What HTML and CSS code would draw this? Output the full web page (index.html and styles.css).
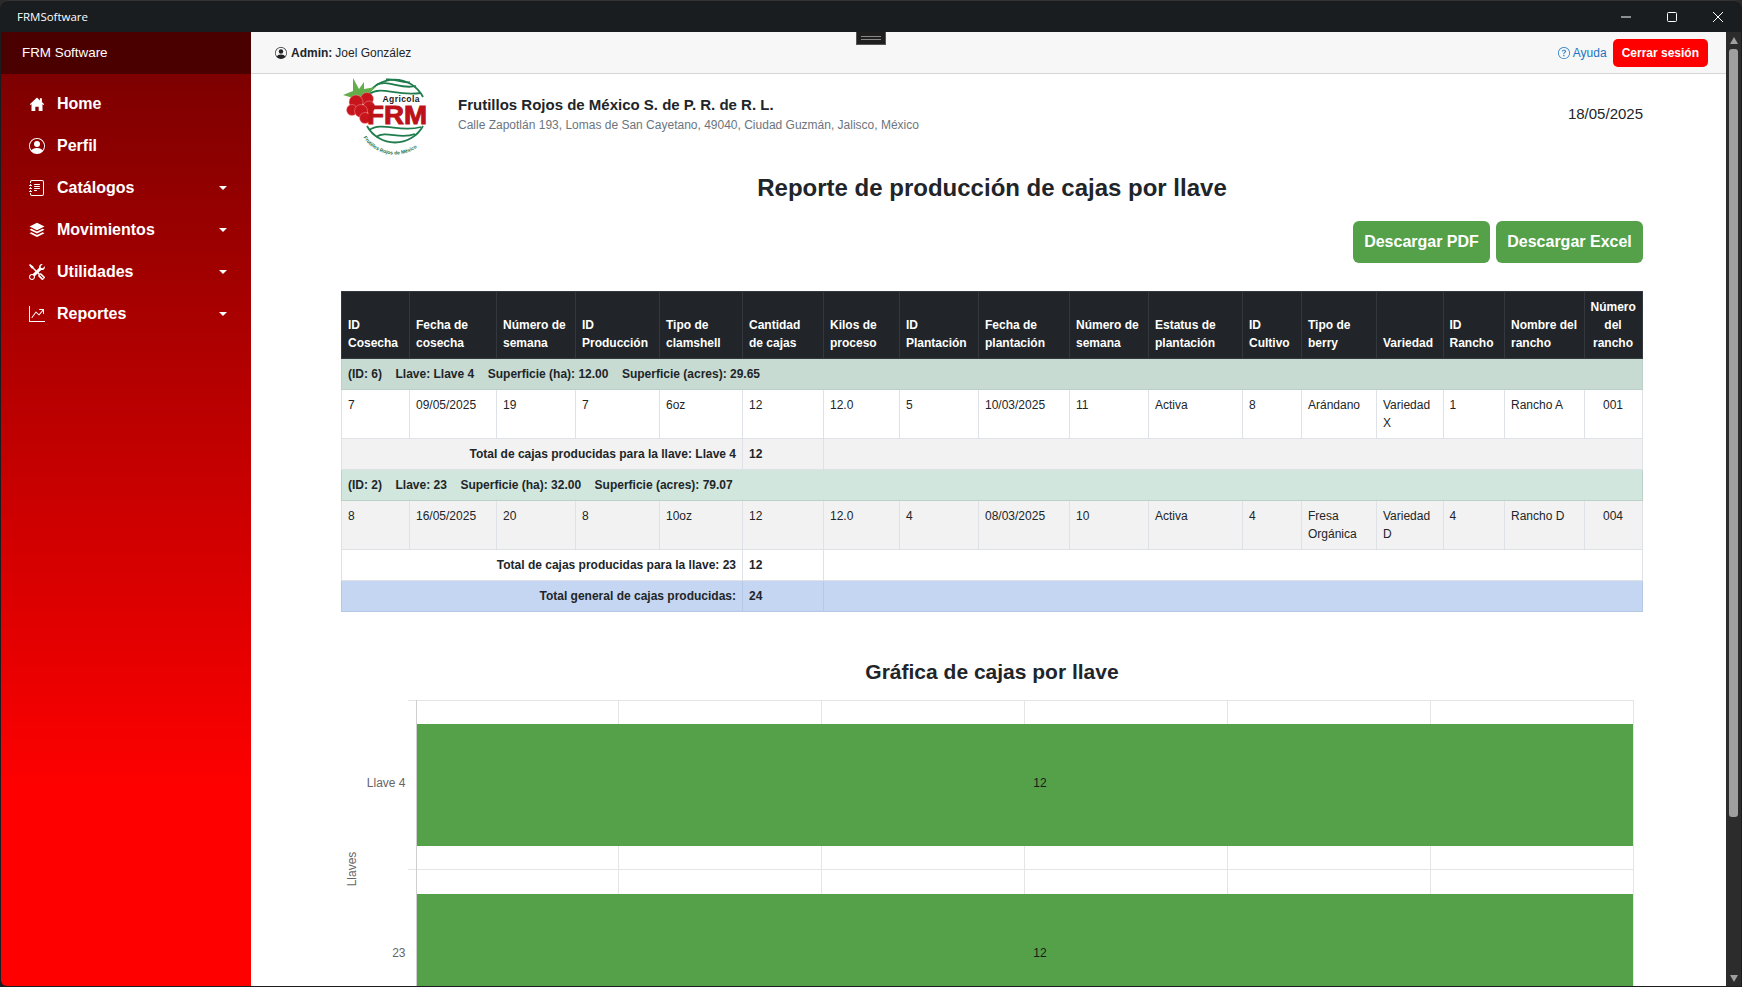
FILE: index.html
```html
<!DOCTYPE html>
<html lang="es">
<head>
    <meta charset="UTF-8">
    <title>FRMSoftware</title>
    <link rel="stylesheet" href="styles.css">
</head>
<body>
<div class="window">
    <div class="titlebar">
        <span class="titlebar-name">FRMSoftware</span>
        <div class="window-controls">
            <svg viewBox="0 0 10 10"><path d="M0 5h10" /></svg>
            <svg viewBox="0 0 10 10"><rect x=".5" y=".5" width="9" height="9" rx="1" /></svg>
            <svg viewBox="0 0 10 10"><path d="M0 0l10 10M10 0L0 10" /></svg>
        </div>
    </div>
    <div class="app">
        <aside class="sidebar">
            <div class="brand">FRM Software</div>
            <nav class="side-nav">
                <a class="side-link">
                    <svg class="side-icon" viewBox="0 0 16 16"><path d="M8 1.5.8 8.2l.8.7.9-.8V15h3.8v-4.3h3.4V15h3.8V8.1l.9.8.8-.7-2.3-2.2V2.2h-2v2.2z" /></svg>
                    <span>Home</span>
                </a>
                <a class="side-link">
                    <svg class="side-icon" viewBox="0 0 16 16"><path d="M11 6a3 3 0 1 1-6 0 3 3 0 0 1 6 0z" /><path fill-rule="evenodd" d="M0 8a8 8 0 1 1 16 0A8 8 0 0 1 0 8zm8-7a7 7 0 0 0-5.468 11.37C3.242 11.226 4.805 10 8 10s4.757 1.225 5.468 2.37A7 7 0 0 0 8 1z" /></svg>
                    <span>Perfil</span>
                </a>
                <a class="side-link">
                    <svg class="side-icon" viewBox="0 0 16 16"><path d="M5 10.5a.5.5 0 0 1 .5-.5h2a.5.5 0 0 1 0 1h-2a.5.5 0 0 1-.5-.5zm0-2a.5.5 0 0 1 .5-.5h5a.5.5 0 0 1 0 1h-5a.5.5 0 0 1-.5-.5zm0-2a.5.5 0 0 1 .5-.5h5a.5.5 0 0 1 0 1h-5a.5.5 0 0 1-.5-.5zm0-2a.5.5 0 0 1 .5-.5h5a.5.5 0 0 1 0 1h-5a.5.5 0 0 1-.5-.5z" /><path d="M3 0h10a2 2 0 0 1 2 2v12a2 2 0 0 1-2 2H3a2 2 0 0 1-2-2v-1h1v1a1 1 0 0 0 1 1h10a1 1 0 0 0 1-1V2a1 1 0 0 0-1-1H3a1 1 0 0 0-1 1v1H1V2a2 2 0 0 1 2-2z" /><path d="M1 5v-.5a.5.5 0 0 1 1 0V5h.5a.5.5 0 0 1 0 1h-2a.5.5 0 0 1 0-1H1zm0 3v-.5a.5.5 0 0 1 1 0V8h.5a.5.5 0 0 1 0 1h-2a.5.5 0 0 1 0-1H1zm0 3v-.5a.5.5 0 0 1 1 0v.5h.5a.5.5 0 0 1 0 1h-2a.5.5 0 0 1 0-1H1z" /></svg>
                    <span>Catálogos</span>
                    <i class="caret"></i>
                </a>
                <a class="side-link">
                    <svg class="side-icon" viewBox="0 0 16 16"><path d="M8 .8l7.5 3.7L8 8.2.5 4.5z" /><path d="M2.4 6.8.5 7.8 8 11.5l7.5-3.7-1.9-1L8 9.6z" /><path d="M2.4 10.2.5 11.2 8 14.9l7.5-3.7-1.9-1L8 13z" /></svg>
                    <span>Movimientos</span>
                    <i class="caret"></i>
                </a>
                <a class="side-link">
                    <svg class="side-icon" viewBox="0 0 16 16"><path d="M1 0 0 1l2.2 3.081a1 1 0 0 0 .815.419h.07a1 1 0 0 1 .708.293l2.675 2.675-2.617 2.654A3.003 3.003 0 0 0 0 13a3 3 0 1 0 5.878-.851l2.654-2.617.968.968-.305.914a1 1 0 0 0 .242 1.023l3.27 3.27a.997.997 0 0 0 1.414 0l1.586-1.586a.997.997 0 0 0 0-1.414l-3.27-3.27a1 1 0 0 0-1.023-.242L10.5 9.5l-.96-.96 2.68-2.643A3.005 3.005 0 0 0 16 3c0-.269-.035-.53-.102-.777l-2.14 2.141L12 4l-.364-1.757L13.777.102a3 3 0 0 0-3.675 3.68L7.462 6.46 4.793 3.793a1 1 0 0 1-.293-.707v-.071a1 1 0 0 0-.419-.814L1 0Zm9.646 10.646a.5.5 0 0 1 .708 0l2.914 2.915a.5.5 0 0 1-.707.707l-2.915-2.914a.5.5 0 0 1 0-.708ZM3 11l.471.242.529.026.287.445.445.287.026.529L5 13l-.242.471-.026.529-.445.287-.287.445-.529.026L3 15l-.471-.242L2 14.732l-.287-.445L1.268 14l-.026-.529L1 13l.242-.471.026-.529.445-.287.287-.445.529-.026L3 11Z" /></svg>
                    <span>Utilidades</span>
                    <i class="caret"></i>
                </a>
                <a class="side-link">
                    <svg class="side-icon" viewBox="0 0 16 16"><path fill-rule="evenodd" d="M0 0h1v15h15v1H0V0Zm10 3.5a.5.5 0 0 1 .5-.5h4a.5.5 0 0 1 .5.5v4a.5.5 0 0 1-1 0V4.9l-3.613 4.417a.5.5 0 0 1-.74.037L7.06 6.767l-3.656 5.027a.5.5 0 0 1-.808-.588l4-5.5a.5.5 0 0 1 .758-.06l2.609 2.61L13.445 4H10.5a.5.5 0 0 1-.5-.5Z" /></svg>
                    <span>Reportes</span>
                    <i class="caret"></i>
                </a>
            </nav>
        </aside>

        <div class="main">
            <header class="navbar">
                <div class="nav-user">
                    <svg class="nav-icon" viewBox="0 0 16 16"><path d="M11 6a3 3 0 1 1-6 0 3 3 0 0 1 6 0z" /><path fill-rule="evenodd" d="M0 8a8 8 0 1 1 16 0A8 8 0 0 1 0 8zm8-7a7 7 0 0 0-5.468 11.37C3.242 11.226 4.805 10 8 10s4.757 1.225 5.468 2.37A7 7 0 0 0 8 1z" /></svg>
                    <b>Admin:</b> Joel González
                </div>
                <div class="nav-actions">
                    <a class="help-link">
                        <svg class="nav-icon" viewBox="0 0 16 16"><path d="M8 15A7 7 0 1 1 8 1a7 7 0 0 1 0 14zm0 1A8 8 0 1 0 8 0a8 8 0 0 0 0 16z" /><path d="M5.255 5.786a.237.237 0 0 0 .241.247h.825c.138 0 .248-.113.266-.25.09-.656.54-1.134 1.342-1.134.686 0 1.314.343 1.314 1.168 0 .635-.374.927-.965 1.371-.673.489-1.206 1.06-1.168 1.987l.003.217a.25.25 0 0 0 .25.246h.811a.25.25 0 0 0 .25-.25v-.105c0-.718.273-.927 1.01-1.486.609-.463 1.244-.977 1.244-2.056 0-1.511-1.276-2.241-2.673-2.241-1.267 0-2.655.59-2.75 2.286zm1.557 5.763c0 .533.425.927 1.01.927.609 0 1.028-.394 1.028-.927 0-.552-.42-.94-1.029-.94-.584 0-1.009.388-1.009.94z" /></svg>
                        Ayuda
                    </a>
                    <a class="logout-btn">Cerrar sesión</a>
                </div>
            </header>
            <div class="nav-handle"><span></span><span></span></div>

            <main class="content">
                <section class="company">
                    <svg class="logo" viewBox="0 0 100 85">
                        <g class="logo-lines">
                            <path d="M26 27A32 32 0 0 1 83 27" />
                            <path d="M29 24C42 15 56 27 81 23" />
                            <path d="M36 15C48 9 60 20 76 16" />
                            <path d="M46 9.500C56 8 62 14 70 12" />
                            <path d="M27 56A32 32 0 0 0 83 56" />
                            <path d="M29 60C42 51 60 63 81 57" />
                            <path d="M36 67C46 60 60 70 75 64" />
                        </g>
                        <path class="logo-leaf" d="M3 25 13 21 13 8 19 19 24 12 24 19 36 17 27 25 21 29 13 28z" />
                        <g class="logo-berry">
                            <circle cx="27" cy="29" r="6.500" />
                            <circle cx="16" cy="32" r="7" />
                            <circle cx="29" cy="37" r="6" />
                            <circle cx="12" cy="40" r="5.500" />
                            <circle cx="21" cy="41" r="6.500" />
                            <circle cx="25" cy="48" r="5.500" />
                        </g>
                        <text class="logo-agricola" x="42.500" y="32" textLength="37">Agricola</text>
                        <text class="logo-frm" x="27" y="53.500" textLength="60" lengthAdjust="spacingAndGlyphs">FRM</text>
                        <path id="logo-curve" class="logo-curve" d="M23 67A38 38 0 0 0 87 67" />
                        <text class="logo-motto"><textPath href="#logo-curve" startOffset="1%">Frutillos Rojos de México</textPath></text>
                    </svg>
                    <div class="company-info">
                        <div class="company-name">Frutillos Rojos de México S. de P. R. de R. L.</div>
                        <div class="company-address">Calle Zapotlán 193, Lomas de San Cayetano, 49040, Ciudad Guzmán, Jalisco, México</div>
                    </div>
                    <div class="report-date">18/05/2025</div>
                </section>

                <h1 class="report-title">Reporte de producción de cajas por llave</h1>

                <div class="report-actions">
                    <a class="green-btn btn-pdf">Descargar PDF</a>
                    <a class="green-btn btn-excel">Descargar Excel</a>
                </div>

                <table class="report">
                    <colgroup>
                        <col><col><col><col><col><col><col><col><col><col><col><col><col><col><col><col><col>
                    </colgroup>
                    <thead>
                        <tr>
                            <th>ID Cosecha</th>
                            <th>Fecha de cosecha</th>
                            <th>Número de semana</th>
                            <th>ID Producción</th>
                            <th>Tipo de clamshell</th>
                            <th>Cantidad de cajas</th>
                            <th>Kilos de proceso</th>
                            <th>ID Plantación</th>
                            <th>Fecha de plantación</th>
                            <th>Número de semana</th>
                            <th>Estatus de plantación</th>
                            <th>ID Cultivo</th>
                            <th>Tipo de berry</th>
                            <th>Variedad</th>
                            <th>ID Rancho</th>
                            <th>Nombre del rancho</th>
                            <th class="center">Número del rancho</th>
                        </tr>
                    </thead>
                    <tbody>
                        <tr class="group-row group-a">
                            <td colspan="17"><span>(ID: 6)</span><span>Llave: Llave 4</span><span>Superficie (ha): 12.00</span><span>Superficie (acres): 29.65</span></td>
                        </tr>
                        <tr>
                            <td>7</td><td>09/05/2025</td><td>19</td><td>7</td><td>6oz</td><td>12</td><td>12.0</td><td>5</td><td>10/03/2025</td><td>11</td><td>Activa</td><td>8</td><td>Arándano</td><td>Variedad X</td><td>1</td><td>Rancho A</td><td class="center">001</td>
                        </tr>
                        <tr class="total-row striped">
                            <td colspan="5" class="right">Total de cajas producidas para la llave: Llave 4</td><td>12</td><td colspan="11"></td>
                        </tr>
                        <tr class="group-row group-b">
                            <td colspan="17"><span>(ID: 2)</span><span>Llave: 23</span><span>Superficie (ha): 32.00</span><span>Superficie (acres): 79.07</span></td>
                        </tr>
                        <tr class="striped">
                            <td>8</td><td>16/05/2025</td><td>20</td><td>8</td><td>10oz</td><td>12</td><td>12.0</td><td>4</td><td>08/03/2025</td><td>10</td><td>Activa</td><td>4</td><td>Fresa Orgánica</td><td>Variedad D</td><td>4</td><td>Rancho D</td><td class="center">004</td>
                        </tr>
                        <tr class="total-row">
                            <td colspan="5" class="right">Total de cajas producidas para la llave: 23</td><td>12</td><td colspan="11"></td>
                        </tr>
                        <tr class="total-row grand-row">
                            <td colspan="5" class="right">Total general de cajas producidas:</td><td>24</td><td colspan="11"></td>
                        </tr>
                    </tbody>
                </table>

                <h2 class="chart-title">Gráfica de cajas por llave</h2>

                <svg class="chart" viewBox="341 690 1302 300">
                    <!-- grid -->
                    <path class="chart-grid" d="M408 701.500H1633.500M408 870.500H1633.500M618.500 701V990M821.500 701V990M1024.500 701V990M1227.500 701V990M1430.500 701V990M1633.500 701V990" />
                    <path class="chart-axis" d="M416.500 701V990" />
                    <rect class="chart-bar" x="417" y="725" width="1216" height="122" />
                    <rect class="chart-bar" x="417" y="895" width="1216" height="100" />
                    <text class="chart-tick" x="405.500" y="788">Llave 4</text>
                    <text class="chart-tick" x="405.500" y="958">23</text>
                    <text class="chart-value" x="1040" y="788">12</text>
                    <text class="chart-value" x="1040" y="958">12</text>
                    <text class="chart-label" transform="translate(356 870) rotate(-90)">Llaves</text>
                </svg>
            </main>
        </div>

        <div class="scrollbar">
            <i class="arrow-up"></i>
            <div class="scroll-thumb"></div>
            <i class="arrow-down"></i>
        </div>
    </div>
</div>
</body>
</html>
```

FILE: styles.css
```css
html, body {
    height: 100%;
}
body {
    margin: 0;
    overflow: hidden;
    background-color: #2a2a2a;
    font-family: "Liberation Sans", Arial, sans-serif;
    color: #212529;
}
.window {
    height: 100vh;
    display: flex;
    flex-direction: column;
    box-sizing: border-box;
    padding: 0 1px 1px;
    background-color: #191d20;
    border-radius: 8px 8px 0 0;
    border-top: 1px solid #333;
}
.titlebar {
    flex: none;
    height: 31px;
    display: flex;
    align-items: center;
    justify-content: space-between;
    padding-left: 16px;
    color: #fff;
}
.titlebar-name {
    font-family: "Open Sans", sans-serif;
    font-size: 11.5px;
}
.window-controls {
    display: flex;
    align-items: center;
    gap: 36px;
    padding-right: 18px;
}
.window-controls svg {
    width: 10px;
    height: 10px;
    fill: none;
    stroke: #fff;
    stroke-width: 1;
}
.app {
    flex: 1;
    min-height: 0;
    display: flex;
}

/* sidebar */
.sidebar {
    flex: none;
    width: 250px;
    background-image: linear-gradient(180deg, #760000 0, #ff0000 759px);
    border-bottom-left-radius: 6px;
    color: #fff;
}
.brand {
    height: 42px;
    line-height: 41px;
    padding-left: 21px;
    background-color: #4b0000;
    font-size: 13.4px;
}
.side-nav {
    padding-top: 9px;
}
.side-link {
    height: 42px;
    display: flex;
    align-items: center;
    padding: 0 24px 0 28px;
    font-size: 16px;
    font-weight: bold;
}
.side-icon {
    flex: none;
    width: 16px;
    height: 16px;
    margin-right: 12px;
    fill: #fff;
}
.caret {
    margin-left: auto;
    border-top: 4.500px solid #fff;
    border-left: 4px solid transparent;
    border-right: 4px solid transparent;
}

/* top bar */
.main {
    flex: 1;
    min-width: 0;
    display: flex;
    flex-direction: column;
    position: relative;
    background-color: #fff;
}
.navbar {
    flex: none;
    height: 41px;
    display: flex;
    align-items: center;
    justify-content: space-between;
    padding: 0 18px 0 24px;
    background-color: #f7f7f7;
    border-bottom: 1px solid #d6d6d6;
    font-size: 12px;
}
.nav-user {
    display: flex;
    align-items: center;
    gap: 3px;
}
.nav-icon {
    width: 12px;
    height: 12px;
    margin-right: 1px;
    fill: currentColor;
}
.nav-actions {
    display: flex;
    align-items: center;
    gap: 6px;
}
.help-link {
    display: flex;
    align-items: center;
    gap: 2px;
    color: #1a75c4;
}
.logout-btn {
    padding: 7px 9px;
    background-color: #ff0000;
    border-radius: 5px;
    color: #fff;
    font-weight: bold;
}
.nav-handle {
    position: absolute;
    top: 0;
    left: 605px;
    width: 30px;
    height: 13px;
    box-sizing: border-box;
    display: flex;
    flex-direction: column;
    justify-content: center;
    align-items: center;
    gap: 2px;
    background-color: #1f1f1f;
    border: 1px solid #555;
    border-top: none;
}
.nav-handle span {
    width: 20px;
    height: 1px;
    background-color: #888;
}

/* report */
.content {
    flex: 1;
    min-height: 0;
    overflow: hidden;
    padding: 2px 83px 0 90px;
}
.company {
    display: flex;
    align-items: flex-start;
}
.logo {
    flex: none;
    width: 100px;
    height: 85px;
    margin: -6px 18px 0 -1px;
}
.logo-lines path, .logo-curve {
    fill: none;
}
.logo-lines path {
    stroke: #1f7d4d;
    stroke-width: 1.800;
}
.logo-leaf {
    fill: #63ad4b;
}
.logo-berry circle {
    fill: #c8141c;
    stroke: #f5b5b5;
    stroke-width: .4;
}
.logo-agricola {
    font-size: 8.5px;
    font-weight: bold;
    fill: #1a1a1a;
}
.logo-frm {
    font-size: 25px;
    font-weight: bold;
    fill: #bd1218;
    stroke: #bd1218;
    stroke-width: .9;
}
.logo-motto {
    font-size: 5px;
    font-weight: bold;
    fill: #1a6f43;
}
.company-info {
    padding-top: 18px;
}
.company-name {
    font-size: 15px;
    font-weight: bold;
    line-height: 21px;
}
.company-address {
    margin-top: 1px;
    font-size: 12px;
    line-height: 18px;
    color: #6c757d;
}
.report-date {
    margin-left: auto;
    padding-top: 27px;
    font-size: 15px;
    line-height: 21px;
}
.report-title {
    margin: 15px 0 0;
    text-align: center;
    font-size: 24px;
    line-height: 36px;
}
.report-actions {
    display: flex;
    justify-content: flex-end;
    gap: 6px;
    margin-top: 14.5px;
}
.green-btn {
    height: 42px;
    line-height: 42px;
    box-sizing: border-box;
    text-align: center;
    background-color: #54a14a;
    border-radius: 6px;
    color: #fff;
    font-size: 16px;
    font-weight: bold;
}
.btn-pdf {
    width: 137px;
}
.btn-excel {
    width: 147px;
}

.report {
    width: 1300.5px;
    margin-top: 28px;
    table-layout: fixed;
    border-collapse: collapse;
    font-size: 12px;
    line-height: 18px;
}
.report col:nth-child(1) { width: 68px; }
.report col:nth-child(2) { width: 87px; }
.report col:nth-child(3) { width: 79px; }
.report col:nth-child(4) { width: 84px; }
.report col:nth-child(5) { width: 83px; }
.report col:nth-child(6) { width: 81px; }
.report col:nth-child(7) { width: 76px; }
.report col:nth-child(8) { width: 79px; }
.report col:nth-child(9) { width: 91px; }
.report col:nth-child(10) { width: 79px; }
.report col:nth-child(11) { width: 94px; }
.report col:nth-child(12) { width: 59px; }
.report col:nth-child(13) { width: 75px; }
.report col:nth-child(14) { width: 66.5px; }
.report col:nth-child(15) { width: 61.5px; }
.report col:nth-child(16) { width: 79.5px; }
.report col:nth-child(17) { width: 58px; }
.report th, .report td {
    padding: 6px;
    border: 1px solid #dee2e6;
    text-align: left;
    vertical-align: top;
    font-weight: normal;
}
.report th {
    vertical-align: bottom;
    background-color: #212529;
    border-color: #32383e;
    color: #fff;
    font-weight: bold;
}
.report .center {
    text-align: center;
}
.report .right {
    text-align: right;
}
.striped td {
    background-color: #f2f2f2;
}
.report .group-row td {
    font-weight: bold;
    border-color: #bcd0c7;
}
.group-row span {
    margin-right: 13.5px;
}
.group-a td {
    background-color: #c7dbd2;
}
.group-b td {
    background-color: #d1e6dd;
}
.report .total-row td {
    font-weight: bold;
    vertical-align: middle;
}
.grand-row td {
    background-color: #c5d6f2;
}
.report .grand-row td {
    border-color: #b5c8e6;
}

/* chart */
.chart-title {
    margin: 45.5px 0 0;
    text-align: center;
    font-size: 21px;
    line-height: 30px;
}
.chart {
    display: block;
    width: 1302px;
    height: 300px;
    margin-top: 2px;
    font-size: 12px;
}
.chart-grid {
    fill: none;
    stroke: #e5e5e5;
}
.chart-axis {
    stroke: #cfcfcf;
}
.chart-bar {
    fill: #54a14a;
}
.chart-tick {
    text-anchor: end;
    fill: #666;
}
.chart-value {
    text-anchor: middle;
    fill: #1a1a1a;
}
.chart-label {
    text-anchor: middle;
    fill: #666;
}

/* fake window scrollbar */
.scrollbar {
    flex: none;
    width: 15px;
    display: flex;
    flex-direction: column;
    align-items: center;
    background-color: #2c2c2c;
}
.scroll-thumb {
    width: 9px;
    height: 768px;
    margin-top: 5px;
    background-color: #9f9f9f;
    border-radius: 3px;
}
.arrow-up, .arrow-down {
    width: 0;
    height: 0;
    border-left: 4.500px solid transparent;
    border-right: 4.500px solid transparent;
}
.arrow-up {
    margin-top: 5px;
    border-bottom: 7px solid #9f9f9f;
}
.arrow-down {
    margin-top: auto;
    margin-bottom: 4px;
    border-top: 7px solid #9f9f9f;
}
```
